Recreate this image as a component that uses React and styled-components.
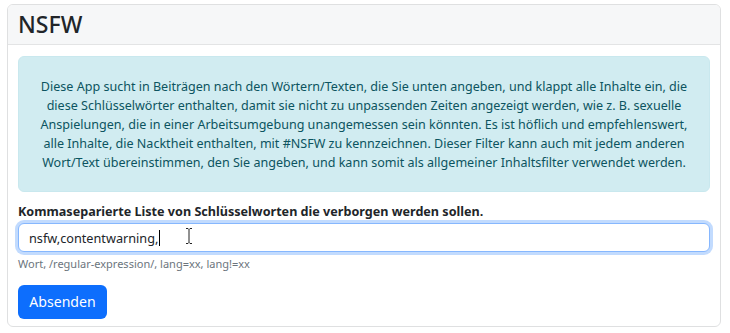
import React from "react";
import styled, { createGlobalStyle } from "styled-components";

const Global = createGlobalStyle`
  html, body { margin: 0; padding: 0; background: #ffffff; }
  body { font-family: "Noto Sans", "Open Sans", sans-serif; color: #212529; }
  * { box-sizing: border-box; }
`;

const Page = styled.div`
  padding: 4px 9px 0 7px;
`;

const Card = styled.section`
  display: flex;
  flex-direction: column;
  border: 1px solid #dfe0e1;
  border-radius: 6px;
  background: #fff;
  overflow: hidden;
`;

const CardHeader = styled.header`
  height: 40px;
  display: flex;
  align-items: center;
  padding: 0 10px;
  background: #f6f7f8;
  border-bottom: 1px solid #e3e4e5;
`;

const Title = styled.h1`
  margin: 0;
  font-size: 23px;
  font-weight: 500;
  line-height: 1;
  color: #212529;
`;

const CardBody = styled.div`
  display: flex;
  flex-direction: column;
  padding: 11px 10px 7px 10px;
`;

const Alert = styled.div`
  background: #d1ecf1;
  border: 1px solid #c9e8ee;
  border-radius: 6px;
  color: #0c5460;
  padding: 20px 14px 19px;
  font-size: 12.55px;
  line-height: 19px;
  text-align: center;
`;

const Label = styled.label`
  margin-top: 11px;
  font-size: 12.6px;
  font-weight: 700;
  line-height: 18px;
  color: #212529;
`;

const InputWrap = styled.div`
  position: relative;
  margin-top: 2px;
  height: 29px;
  border: 1px solid #86b7fe;
  border-radius: 6px;
  box-shadow: 0 0 0 3px rgba(13, 110, 253, 0.25);
  display: flex;
  align-items: center;
  padding: 0 10px;
  font-size: 12.7px;
  color: #212529;
  background: #fff;
`;

const Caret = styled.span`
  display: inline-block;
  width: 1px;
  height: 16px;
  background: #000;
  margin-left: 1px;
`;

const Pointer = styled.svg`
  position: absolute;
  left: 166px;
  top: 3px;
`;

const Help = styled.div`
  margin-top: 4px;
  font-size: 11px;
  line-height: 16px;
  color: #6c757d;
`;

const Button = styled.button`
  align-self: flex-start;
  margin-top: 13px;
  width: 89px;
  height: 34px;
  padding: 0;
  border: none;
  border-radius: 6px;
  background: #0d6efd;
  color: #fff;
  font-family: inherit;
  font-size: 14.1px;
  line-height: 1;
`;

export default function App() {
  return (
    <Page>
      <Global />
      <Card>
        <CardHeader>
          <Title>NSFW</Title>
        </CardHeader>
        <CardBody>
          <Alert>
            Diese App sucht in Beiträgen nach den Wörtern/Texten, die Sie unten angeben, und klappt alle Inhalte ein, die
            diese Schlüsselwörter enthalten, damit sie nicht zu unpassenden Zeiten angezeigt werden, wie z. B. sexuelle
            Anspielungen, die in einer Arbeitsumgebung unangemessen sein könnten. Es ist höflich und empfehlenswert,
            alle Inhalte, die Nacktheit enthalten, mit #NSFW zu kennzeichnen. Dieser Filter kann auch mit jedem anderen
            Wort/Text übereinstimmen, den Sie angeben, und kann somit als allgemeiner Inhaltsfilter verwendet werden.
          </Alert>
          <Label>Kommaseparierte Liste von Schlüsselworten die verborgen werden sollen.</Label>
          <InputWrap role="textbox">
            nsfw,contentwarning,<Caret />
            <Pointer width="8" height="18" viewBox="0 0 8 18">
              <path d="M1 1.5h2l1 1 1-1h2M4 2.5v13M1 16.5h2l1-1 1 1h2" stroke="#fff" strokeWidth="2.6" fill="none" />
              <path d="M1 1.5h2l1 1 1-1h2M4 2.5v13M1 16.5h2l1-1 1 1h2" stroke="#222" strokeWidth="1" fill="none" />
            </Pointer>
          </InputWrap>
          <Help>Wort, /regular-expression/, lang=xx, lang!=xx</Help>
          <Button type="button">Absenden</Button>
        </CardBody>
      </Card>
    </Page>
  );
}
